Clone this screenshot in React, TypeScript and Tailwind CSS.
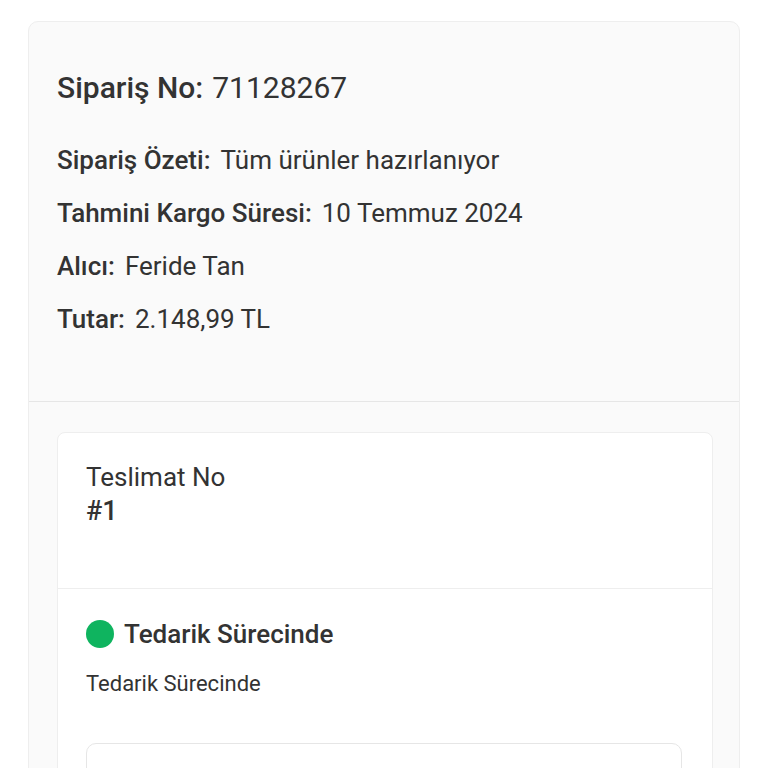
import React from "react";

const Row = ({ label, value }: { label: string; value: string }) => (
  <div className="flex items-baseline gap-[10px] text-[26px] leading-[53px] text-[#333]">
    <span className="font-medium">{label}</span>
    <span>{value}</span>
  </div>
);

export default function App() {
  return (
    <div className="min-h-[768px] bg-white pt-[21px] px-[28px] overflow-hidden" style={{ fontFamily: "Roboto, 'Noto Sans', sans-serif" }}>
      <div className="mx-auto w-[712px] rounded-[10px] border border-[#eeeeee] bg-[#fafafa]">
        <div className="px-[28px] pt-[46px] pb-[55px] border-b border-[#e6e6e6]">
          <div className="flex items-baseline gap-[9px] text-[30px] leading-[40px] text-[#333]">
            <span className="font-medium">Sipariş No:</span>
            <span>71128267</span>
          </div>
          <div className="mt-[26px]">
            <Row label="Sipariş Özeti:" value="Tüm ürünler hazırlanıyor" />
            <Row label="Tahmini Kargo Süresi:" value="10 Temmuz 2024" />
            <Row label="Alıcı:" value="Feride Tan" />
            <Row label="Tutar:" value="2.148,99 TL" />
          </div>
        </div>
        <div className="pl-[28px] pr-[26px] pt-[30px] pb-[40px]">
          <div className="rounded-[8px] border border-[#eeeeee] bg-white">
            <div className="px-[28px] pt-[28px] pb-[59px] border-b border-[#eeeeee] text-[#333]">
              <div className="text-[26px] leading-[32px]">Teslimat No</div>
              <div className="text-[27px] leading-[36px] font-medium">#1</div>
            </div>
            <div className="pl-[28px] pr-[30px] pt-[29px] pb-[40px]">
              <div className="flex items-center gap-[10px]">
                <span className="h-[28px] w-[28px] rounded-full bg-[#0fb45f]" />
                <span className="text-[26px] leading-[32px] font-medium text-[#333]">Tedarik Sürecinde</span>
              </div>
              <div className="mt-[19px] text-[22px] leading-[30px] text-[#333]">Tedarik Sürecinde</div>
              <div className="mt-[44px] h-[160px] rounded-[10px] border border-[#e6e6e6] bg-white" />
            </div>
          </div>
        </div>
      </div>
    </div>
  );
}
